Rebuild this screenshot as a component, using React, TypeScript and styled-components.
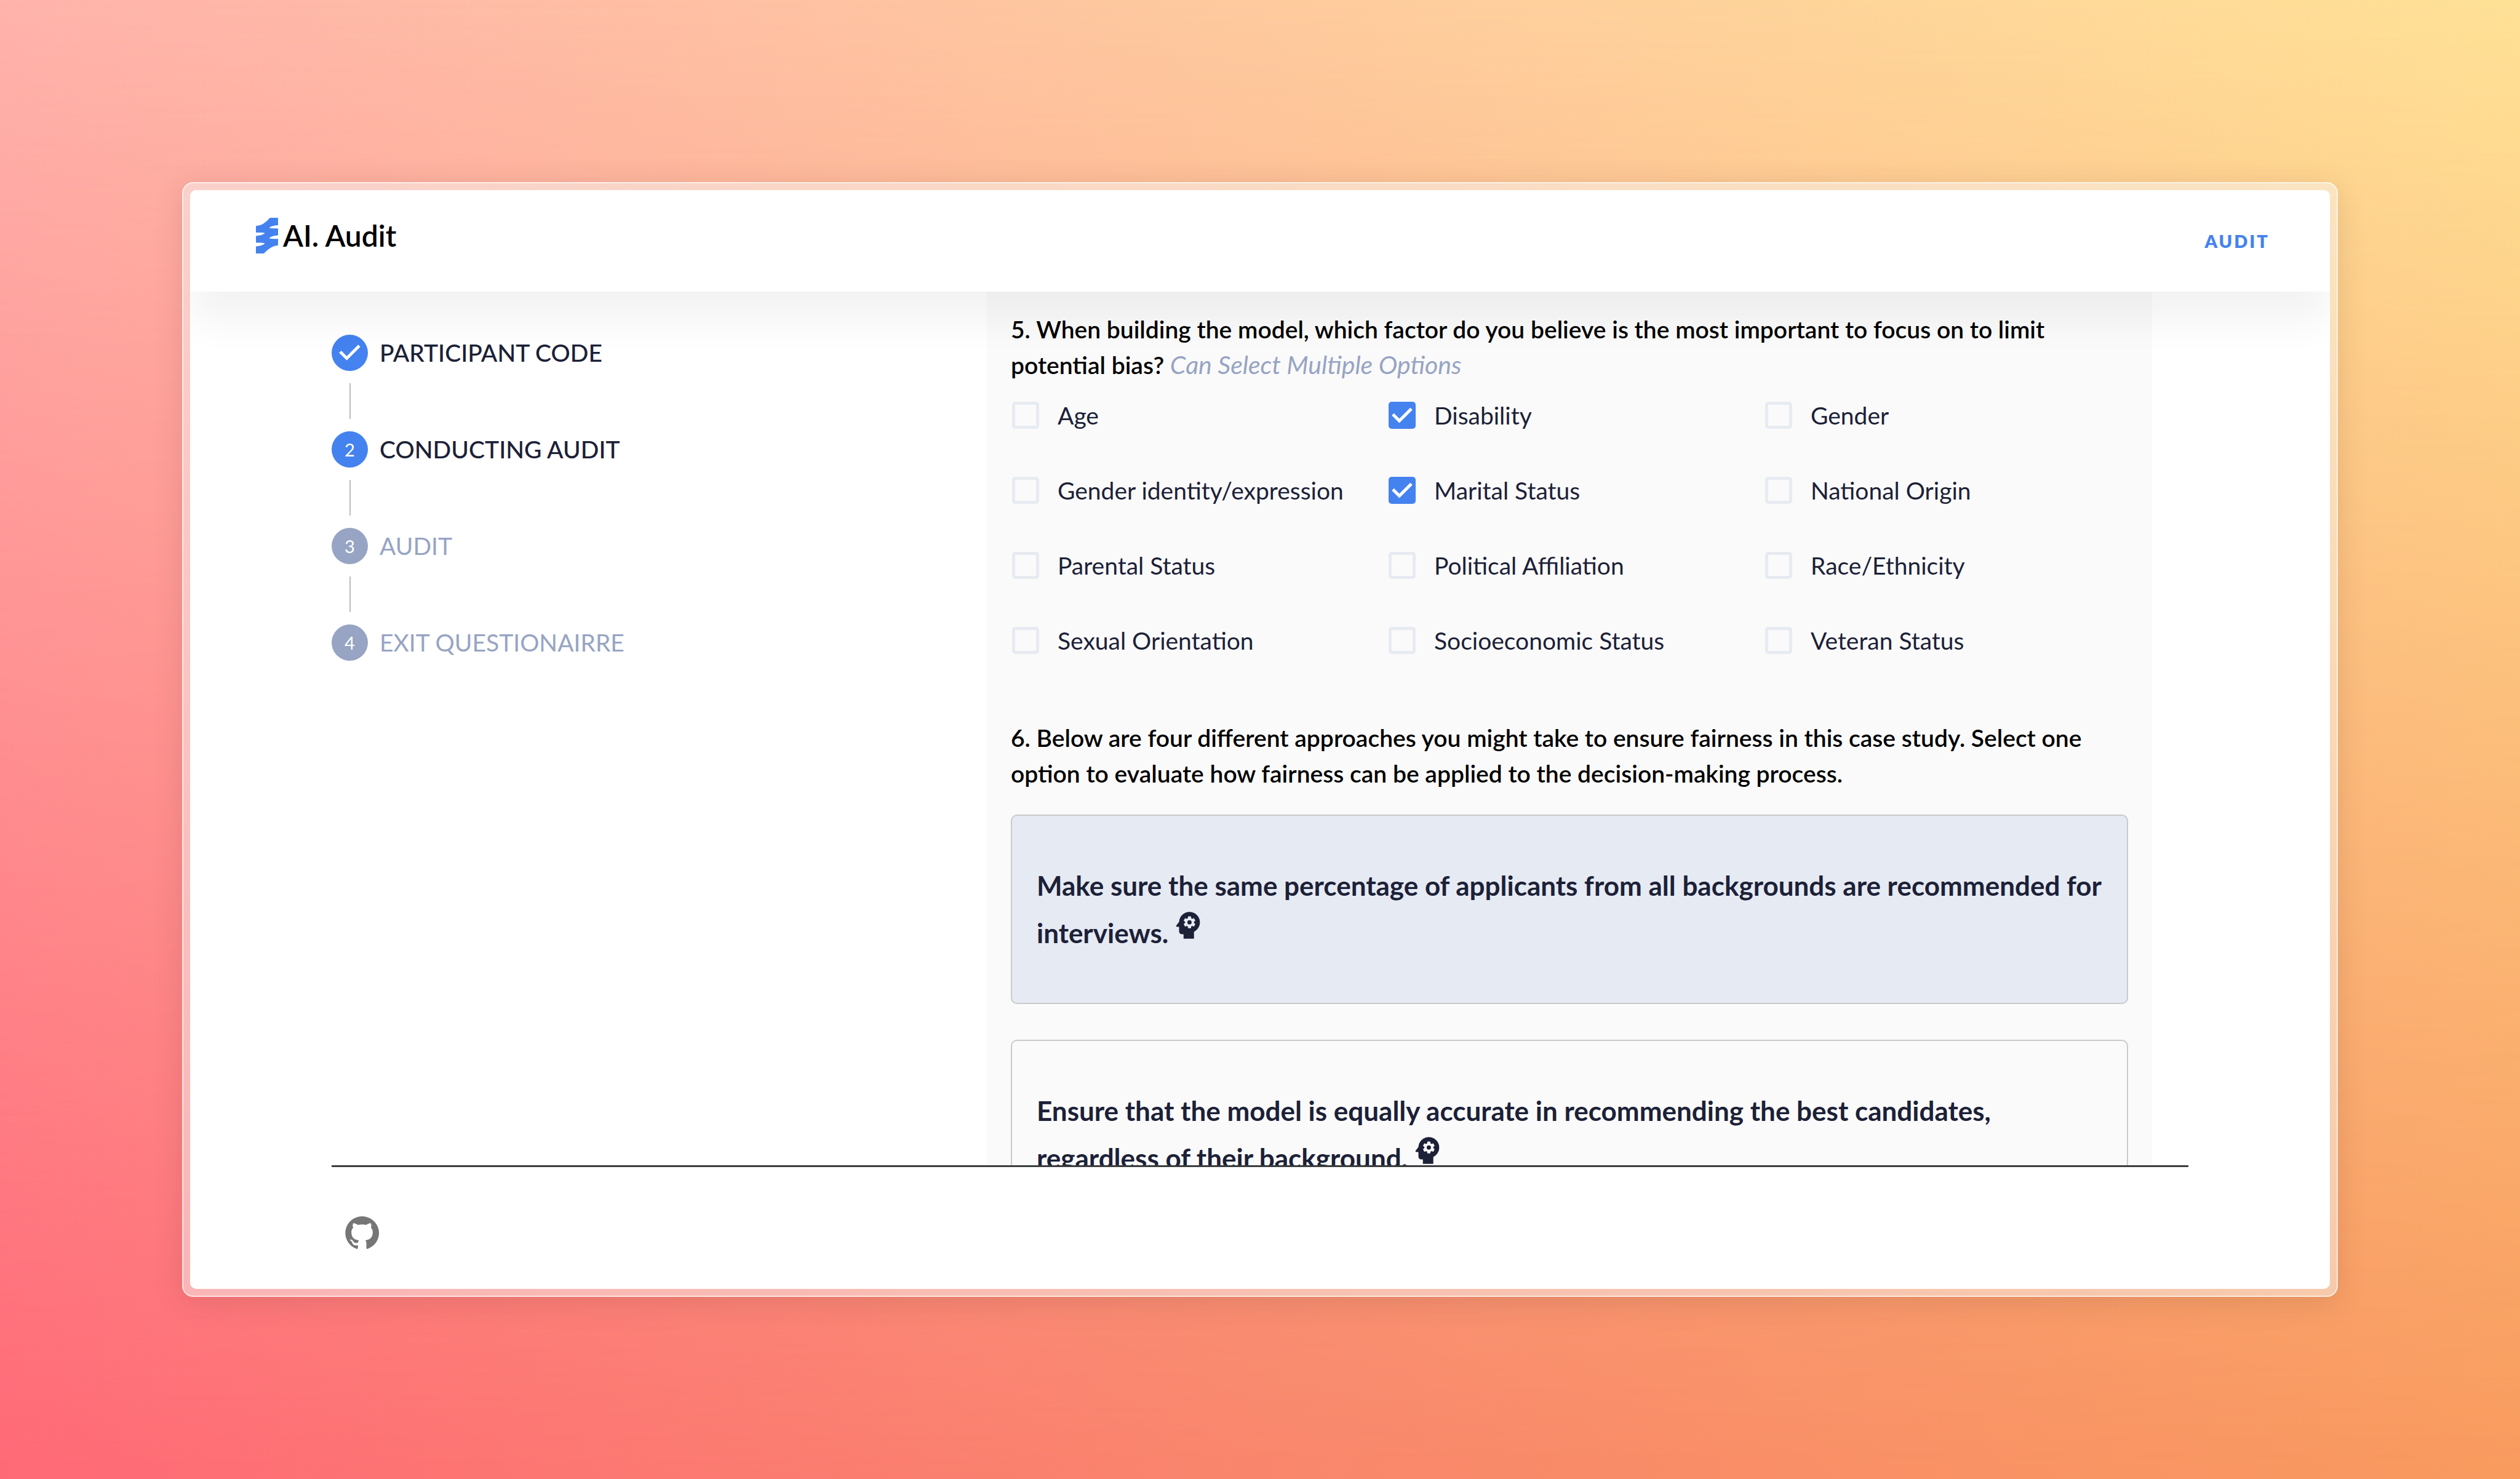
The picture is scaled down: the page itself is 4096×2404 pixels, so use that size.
import React, { useState } from "react";
import styled, { createGlobalStyle } from "styled-components";
import { MdPsychology } from "react-icons/md";

const color = {
  blue: "#4482f0",
  ink: "#1c2137",
  muted: "#97a4c3",
  line: "#c9cacc",
};

const GlobalStyle = createGlobalStyle`
  *, *::before, *::after { box-sizing: border-box; }
  body {
    margin: 0;
    font-family: Lato, "Open Sans", sans-serif;
    font-size: 39px;
    line-height: 58px;
    color: ${color.ink};
  }
`;

const Backdrop = styled.div`
  position: relative;
  display: flex;
  height: 100vh;
  padding: 296px;
  background: linear-gradient(to right, #ff6a77, #f9866c 50%, #f99b5f);

  &::before {
    content: "";
    position: absolute;
    inset: 0;
    background: linear-gradient(to right, #ffb3ab, #fec89f 45%, #ffe196);
    mask-image: linear-gradient(to bottom, #000, transparent);
  }
`;

const Frame = styled.div`
  position: relative;
  display: flex;
  flex: 1;
  min-width: 0;
  padding: 11px;
  border: 2px solid rgba(255, 255, 255, 0.6);
  border-radius: 18px;
  background: rgba(246, 244, 242, 0.5);
  box-shadow: 0 8px 48px rgba(80, 50, 40, 0.15);
`;

const Window = styled.div`
  display: flex;
  flex: 1;
  min-width: 0;
  flex-direction: column;
  overflow: hidden;
  border-radius: 10px;
  background: #fff;
`;

const Header = styled.header`
  position: relative;
  z-index: 1;
  display: flex;
  flex: none;
  align-items: center;
  justify-content: space-between;
  height: 165px;
  padding: 0 98px 0 107px;
  background: #fff;
  box-shadow: 0 48px 65px rgba(0, 0, 0, 0.05);
`;

const Brand = styled.a`
  display: flex;
  align-items: center;
  gap: 8px;
  padding-bottom: 18px;
  color: #000;
  font-size: 48px;
  font-weight: 600;
  text-decoration: none;
`;

const NavLink = styled.a`
  color: ${color.blue};
  font-size: 29px;
  font-weight: 800;
  letter-spacing: 3px;
  text-decoration: none;
`;

const Main = styled.main`
  display: grid;
  flex: 1;
  grid-template-columns: 1065fr 1894fr;
  min-height: 0;
  padding: 0 289px 0 230px;
  overflow: hidden;
`;

const Steps = styled.ol`
  display: flex;
  flex-direction: column;
  margin: 0;
  padding: 70px 0 0;
  list-style: none;
`;

const Step = styled.li<{ $reached: boolean }>`
  display: grid;
  grid-template-columns: 59px 1fr;
  align-items: center;
  column-gap: 19px;
  line-height: 59px;
  font-weight: ${(p) => (p.$reached ? 500 : 400)};
  color: ${(p) => (p.$reached ? color.ink : color.muted)};

  &:not(:last-child)::after {
    content: "";
    width: 2px;
    height: 58px;
    margin: 20px auto;
    background: #bdbdbd;
  }
`;

const StepNumber = styled.span<{ $reached: boolean }>`
  display: grid;
  place-items: center;
  height: 59px;
  border-radius: 50%;
  background: ${(p) => (p.$reached ? color.blue : color.muted)};
  color: #fff;
  font-size: 29px;
  font-weight: 400;
`;

const DoneIcon = styled.svg`
  width: 59px;
  height: 59px;
  fill: ${color.blue};
`;

const Panel = styled.section`
  min-height: 0;
  padding: 32px 39px 0;
  overflow: hidden;
  background: #fafafa;
`;

const Question = styled.h2`
  margin: 0;
  color: #000;
  font-size: 39px;
  font-weight: 600;
`;

const Hint = styled.em`
  color: ${color.muted};
  font-size: 41px;
  font-weight: 400;
`;

const Options = styled.div`
  display: grid;
  grid-template-columns: repeat(3, 1fr);
  gap: 78px 20px;
  margin: 31px 0 107px;
`;

const Option = styled.label`
  display: flex;
  align-items: center;
  gap: 30px;
  padding-left: 2px;
  line-height: 44px;
  white-space: nowrap;
`;

const TickBox = styled.span`
  display: grid;
  flex: none;
  width: 44px;
  height: 44px;

  & > * {
    grid-area: 1 / 1;
  }
`;

const TickInput = styled.input`
  appearance: none;
  margin: 0;
  border: 5px solid #e7ebf1;
  border-radius: 5px;

  &:checked {
    border-color: ${color.blue};
    background: ${color.blue};
  }
`;

const TickMark = styled.svg`
  width: 44px;
  height: 44px;
  fill: none;
  stroke: #fff;
  stroke-width: 5;
  pointer-events: none;
`;

const Cards = styled.div`
  display: grid;
  gap: 58px;
  margin-top: 38px;
`;

const Card = styled.label<{ $selected: boolean }>`
  display: block;
  padding: 75px 36px 75px 40px;
  border: 2px solid ${color.line};
  border-radius: 10px;
  background: ${(p) => (p.$selected ? "#e6eaf3" : "transparent")};
  font-size: 44px;
  font-weight: 700;
  line-height: 77px;
`;

const CardInput = styled.input`
  position: absolute;
  opacity: 0;
`;

const CardIcon = styled(MdPsychology)`
  width: 58px;
  height: 58px;
  margin-top: -4px;
  margin-left: -8px;
  vertical-align: baseline;
`;

const Footer = styled.footer`
  flex: none;
  height: 201px;
  margin: 0 230px;
  padding: 77px 20px 0;
  border-top: 3px solid #3a3c3e;
`;

const GithubLink = styled.a`
  display: inline-flex;
  color: #767676;
`;

const GithubMark = styled.svg`
  width: 59px;
  height: 59px;
  fill: currentColor;
`;

const LogoMark = styled.svg`
  width: 36px;
  height: 58px;
  fill: ${color.blue};
`;

const STEPS = ["PARTICIPANT CODE", "CONDUCTING AUDIT", "AUDIT", "EXIT QUESTIONAIRRE"];
const ACTIVE_STEP = 1;

const FACTORS = [
  "Age",
  "Disability",
  "Gender",
  "Gender identity/expression",
  "Marital Status",
  "National Origin",
  "Parental Status",
  "Political Affiliation",
  "Race/Ethnicity",
  "Sexual Orientation",
  "Socioeconomic Status",
  "Veteran Status",
];

const APPROACHES = [
  "Make sure the same percentage of applicants from all backgrounds are recommended for interviews.",
  "Ensure that the model is equally accurate in recommending the best candidates, regardless of their background.",
];

function Stepper() {
  return (
    <Steps>
      {STEPS.map((label, i) => {
        const reached = i <= ACTIVE_STEP;
        return (
          <Step key={label} $reached={reached}>
            {i < ACTIVE_STEP ? (
              <DoneIcon viewBox="0 0 24 24" aria-label="Completed">
                <path d="M12 0a12 12 0 1 0 0 24 12 12 0 0 0 0-24zm-2 17l-5-5 1.4-1.4 3.6 3.6 7.6-7.6L19 8l-9 9z" />
              </DoneIcon>
            ) : (
              <StepNumber $reached={reached}>{i + 1}</StepNumber>
            )}
            {label}
          </Step>
        );
      })}
    </Steps>
  );
}

function FactorOptions() {
  const [chosen, setChosen] = useState(["Disability", "Marital Status"]);
  const toggle = (name: string) =>
    setChosen((list) => (list.includes(name) ? list.filter((n) => n !== name) : [...list, name]));

  return (
    <Options>
      {FACTORS.map((name) => (
        <Option key={name}>
          <TickBox>
            <TickInput type="checkbox" checked={chosen.includes(name)} onChange={() => toggle(name)} />
            {chosen.includes(name) && (
              <TickMark viewBox="0 0 44 44">
                <path d="M7 20.5l10.5 10.5L37 11.5" />
              </TickMark>
            )}
          </TickBox>
          {name}
        </Option>
      ))}
    </Options>
  );
}

function ApproachCards() {
  const [picked, setPicked] = useState(0);
  return (
    <Cards>
      {APPROACHES.map((text, i) => (
        <Card key={text} $selected={picked === i}>
          <CardInput type="radio" name="approach" checked={picked === i} onChange={() => setPicked(i)} />
          {text} <CardIcon />
        </Card>
      ))}
    </Cards>
  );
}

export default function App() {
  return (
    <Backdrop>
      <GlobalStyle />
      <Frame>
        <Window>
          <Header>
            <Brand href="#">
              <LogoMark viewBox="0 0 130 210" preserveAspectRatio="none">
                <path d="M82 0H130V43C108 44 84 50 78 60C88 63 110 63 130 63V103C108 104 84 110 78 121C95 124 115 124 130 124V162C100 165 75 180 47 210H0V168C22 166 46 160 52 150C40 147 20 147 0 147V107C22 105 46 100 52 90C40 87 20 87 0 87V48C35 45 55 30 82 0Z" />
              </LogoMark>
              AI. Audit
            </Brand>
            <NavLink href="#audit">AUDIT</NavLink>
          </Header>
          <Main>
            <Stepper />
            <Panel>
              <Question>
                5. When building the model, which factor do you believe is the most important to focus on to limit
                potential bias? <Hint>Can Select Multiple Options</Hint>
              </Question>
              <FactorOptions />
              <Question>
                6. Below are four different approaches you might take to ensure fairness in this case study. Select one
                option to evaluate how fairness can be applied to the decision-making process.
              </Question>
              <ApproachCards />
            </Panel>
          </Main>
          <Footer>
            <GithubLink href="#github" aria-label="GitHub">
              <GithubMark viewBox="0 0 24 24">
                <path d="M12 1.27a11 11 0 00-3.48 21.46c.55.09.73-.28.73-.55v-1.84c-3.03.64-3.67-1.46-3.67-1.46-.55-1.29-1.28-1.65-1.28-1.65-.92-.65.1-.65.1-.65 1.1 0 1.73 1.1 1.73 1.1.92 1.65 2.57 1.2 3.21.92a2 2 0 01.64-1.47c-2.47-.27-5.04-1.19-5.04-5.5 0-1.1.46-2.1 1.2-2.84a3.76 3.76 0 010-2.93s.91-.28 3.11 1.1c1.8-.49 3.7-.49 5.5 0 2.1-1.38 3.02-1.1 3.02-1.1a3.76 3.76 0 01.1 2.93c.83.74 1.2 1.74 1.2 2.94 0 4.21-2.57 5.13-5.04 5.4.45.37.82.92.82 2.02v3.03c0 .27.1.64.73.55A11 11 0 0012 1.27" />
              </GithubMark>
            </GithubLink>
          </Footer>
        </Window>
      </Frame>
    </Backdrop>
  );
}
